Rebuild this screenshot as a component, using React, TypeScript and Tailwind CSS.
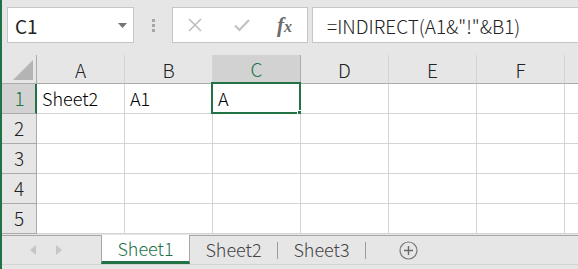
import React from "react"

const cols = ["A", "B", "C", "D", "E", "F"]
const rows = [1, 2, 3, 4, 5]
const data: Record<string, string> = { A1: "Sheet2", B1: "A1", C1: "A" }

const font = { fontFamily: '"Noto Sans CJK JP", "Noto Sans", sans-serif' }

function Toolbar() {
  return (
    <div className="h-[55px] flex items-start pt-[7px] pl-[5px]">
      {/* Name box */}
      <div className="w-[127px] h-[36px] bg-white border border-[#c6c6c6] flex items-center pl-[7px] pr-[6px]">
        <span className="text-[19px] text-[#222] leading-none flex-1">C1</span>
        <svg width="9" height="5" viewBox="0 0 9 5">
          <path d="M0 0h9L4.5 5z" fill="#737373" />
        </svg>
      </div>
      {/* dots */}
      <div className="w-[38px] h-[36px] flex flex-col items-center justify-center gap-[2px]">
        <span className="w-[3px] h-[3px] bg-[#a6a6a6]" />
        <span className="w-[3px] h-[3px] bg-[#a6a6a6]" />
        <span className="w-[3px] h-[3px] bg-[#a6a6a6]" />
      </div>
      {/* icon box */}
      <div className="w-[136px] h-[36px] bg-white border border-[#c6c6c6] flex items-center">
        <svg width="16" height="16" viewBox="0 0 16 16" className="ml-[14px]">
          <path d="M2 2l12 12M14 2L2 14" stroke="#bdbdbd" strokeWidth="1.6" />
        </svg>
        <svg width="16" height="14" viewBox="0 0 16 14" className="ml-[31px]">
          <path d="M1 7.5l4.5 4.5L15 2" stroke="#c2c2c2" strokeWidth="2.2" fill="none" />
        </svg>
        <span
          className="ml-[27px] text-[21px] italic font-bold text-[#6b6b6b] leading-none"
          style={{ fontFamily: '"Liberation Serif", "DejaVu Serif", serif' }}
        >
          f<span className="text-[16px]">x</span>
        </span>
      </div>
      {/* formula */}
      <div className="ml-[4px] flex-1 h-[36px] bg-white border border-[#c6c6c6] border-r-0 flex items-center pl-[14px]">
        <span className="text-[19px] font-light text-[#222] leading-none">=INDIRECT(A1&amp;"!"&amp;B1)</span>
      </div>
    </div>
  )
}

function Grid() {
  return (
    <div className="flex flex-col">
      {/* header row */}
      <div className="flex h-[29px]">
        <div className="w-[35px] shrink-0 border-r border-b border-[#ababab] flex items-end justify-end pr-[3px] pb-[3px]">
          <svg width="20" height="20" viewBox="0 0 20 20">
            <path d="M20 0V20H0z" fill="#b4b4b4" />
          </svg>
        </div>
        {cols.map((c) => (
          <div
            key={c}
            className={
              c === "C"
                ? "w-[88px] shrink-0 bg-[#d2d2d2] border-r border-[#ababab] border-b-2 border-b-[#217346] flex items-center justify-center text-[19px] font-light text-[#217346] pt-[2px]"
                : "w-[88px] shrink-0 border-r border-[#d4d4d4] border-b border-b-[#ababab] flex items-center justify-center text-[19px] font-light text-[#222] pt-[2px]"
            }
          >
            {c}
          </div>
        ))}
        <div className="flex-1 border-b border-[#ababab]" />
      </div>
      {rows.map((r) => (
        <div key={r} className="flex h-[30px]">
          <div
            className={
              r === 1
                ? "w-[35px] shrink-0 bg-[#d2d2d2] border-r-2 border-[#217346] border-b border-b-[#ababab] flex items-center justify-center text-[19px] font-light text-[#217346] pl-[2px]"
                : "w-[35px] shrink-0 border-r border-[#ababab] border-b border-b-[#ababab] flex items-center justify-center text-[19px] font-light text-[#222]"
            }
          >
            {r}
          </div>
          {cols.map((c) => (
            <div
              key={c}
              className="relative w-[88px] shrink-0 bg-white border-r border-b border-[#d4d4d4] flex items-end pl-[5px] pb-[1px] text-[18px] font-light text-black leading-[28px]"
            >
              {data[c + r]}
              {c === "C" && r === 1 && (
                <div className="absolute left-[-2px] top-[-2px] w-[90px] h-[32px] border-2 border-[#217346]">
                  <span className="absolute right-[-4px] bottom-[-4px] w-[6px] h-[6px] bg-[#217346] border border-white" />
                </div>
              )}
            </div>
          ))}
          <div className="flex-1 bg-white border-b border-[#d4d4d4]" />
        </div>
      ))}
    </div>
  )
}

function Tabs() {
  const sheets = ["Sheet1", "Sheet2", "Sheet3"]
  return (
    <div className="flex flex-col">
      <div className="h-[29px] flex border-t border-[#a6a6a6] mt-[1px]">
        <div className="w-[99px] flex items-center pl-[28px] gap-[20px]">
          <svg width="6" height="10" viewBox="0 0 6 10">
            <path d="M6 0v10L0 5z" fill="#c6c6c6" />
          </svg>
          <svg width="6" height="10" viewBox="0 0 6 10">
            <path d="M0 0v10l6-5z" fill="#c6c6c6" />
          </svg>
        </div>
        {sheets.map((s, i) =>
          i === 0 ? (
            <div
              key={s}
              className="w-[89px] -mt-[1px] bg-white border-x border-[#a6a6a6] border-b-[3px] border-b-[#217346] flex items-center justify-center text-[18px] font-light text-[#217346]"
            >
              {s}
            </div>
          ) : (
            <div key={s} className="w-[88px] flex items-center">
              <span className="flex-1 text-center text-[18px] font-light text-[#444] pb-[2px]">{s}</span>
              <span className="w-px h-[17px] bg-[#9a9a9a]" />
            </div>
          )
        )}
        <div className="flex items-center pl-[33px]">
          <svg width="19" height="19" viewBox="0 0 19 19">
            <circle cx="9.5" cy="9.5" r="8.5" stroke="#7a7a7a" strokeWidth="1.2" fill="none" />
            <path d="M9.5 5v9M5 9.5h9" stroke="#6a6a6a" strokeWidth="1.4" />
          </svg>
        </div>
      </div>
      <div className="flex-1 h-[5px] bg-[#f3f3f3] border-t border-[#d4d4d4]" />
    </div>
  )
}

export default function App() {
  return (
    <div
      className="w-[578px] h-[269px] overflow-hidden bg-[#e6e6e6] border-l-2 border-[#217346] flex flex-col"
      style={font}
    >
      <Toolbar />
      <Grid />
      <Tabs />
    </div>
  )
}
